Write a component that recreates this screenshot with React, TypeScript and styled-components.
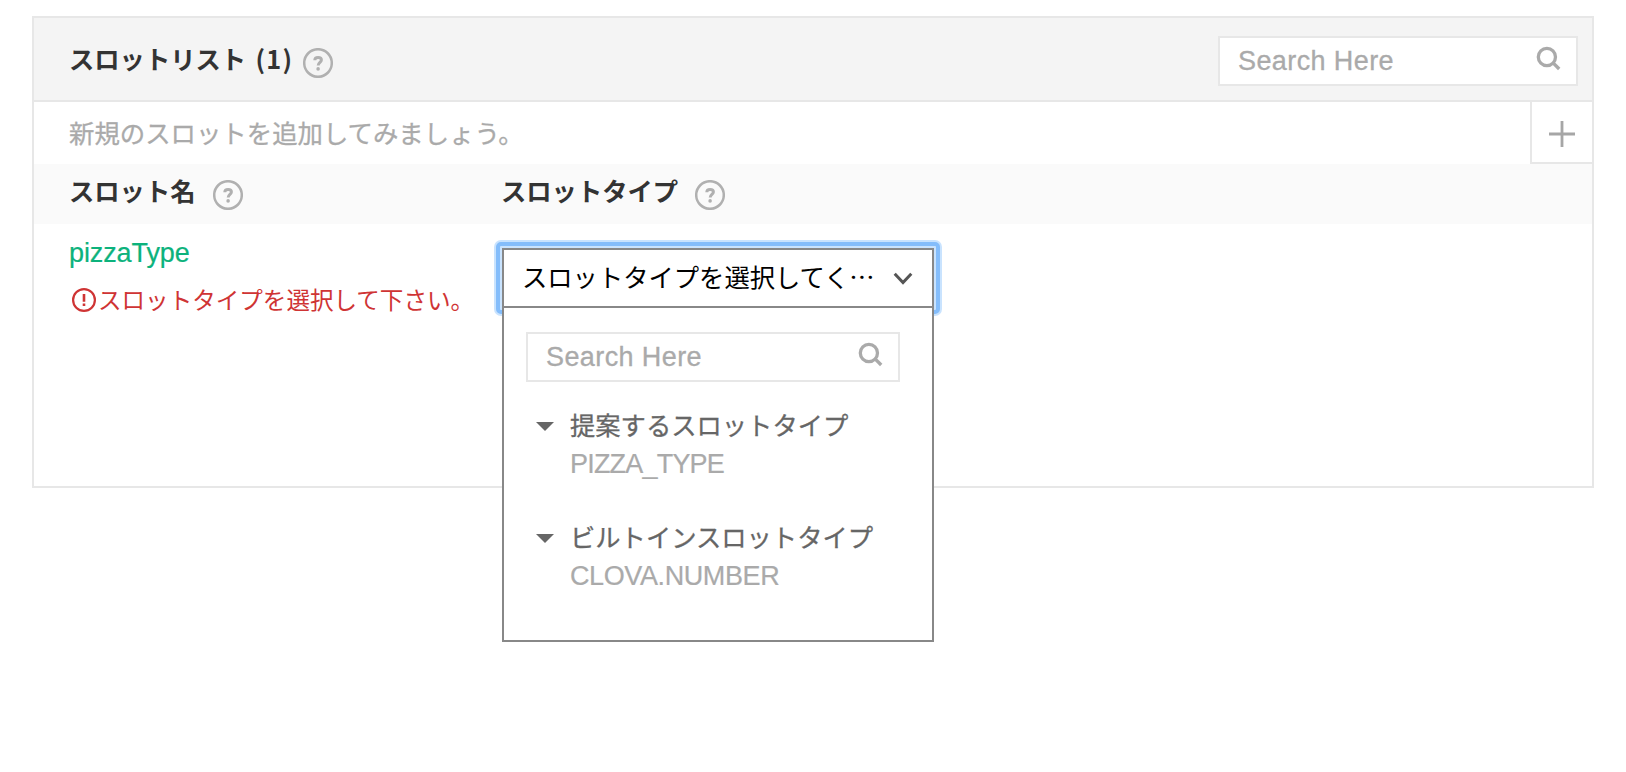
import React from "react";
import styled, { createGlobalStyle } from "styled-components";

const jp = `"Noto Sans CJK JP", sans-serif`;
const latin = `"Liberation Sans", "Noto Sans CJK JP", sans-serif`;

const GlobalStyle = createGlobalStyle`
  * { box-sizing: border-box; }
  body { margin: 0; background: #fff; font-family: ${jp}; }
  svg { display: block; flex: none; }
`;

const Page = styled.main`
  width: 1626px;
  height: 772px;
  padding: 16px 32px;
`;

const Panel = styled.section`
  height: 472px;
  border: 2px solid #e7e7e7;
  display: flex;
  flex-direction: column;
`;

const PanelHeader = styled.header`
  height: 84px;
  padding: 18px 14px 0 35px;
  display: flex;
  justify-content: space-between;
  align-items: flex-start;
  background: #f4f4f4;
  border-bottom: 2px solid #e7e7e7;
`;

const TitleGroup = styled.div`
  display: flex;
  align-items: flex-start;
`;

const Heading = styled.h2<{ $width: number }>`
  margin: 0;
  width: ${(p) => p.$width}px;
  font-size: 25.3px;
  line-height: 44px;
  font-weight: 700;
  color: #333;
  white-space: nowrap;
`;

const Count = styled.span`
  margin-left: 2.5px;
  letter-spacing: 1.2px;
`;

const HelpButton = styled.span`
  margin-top: 12px;
`;

const SearchBox = styled.label<{ $width: number }>`
  width: ${(p) => p.$width}px;
  height: 50px;
  padding: 0 14px 0 18px;
  display: flex;
  align-items: flex-start;
  justify-content: space-between;
  background: #fff;
  border: 2px solid #e7e7e7;
`;

const SearchText = styled.span`
  font-family: ${latin};
  font-size: 27px;
  line-height: 46px;
  letter-spacing: 0.4px;
  color: #aaa;
  -webkit-text-stroke: 0.3px #aaa;
`;

const SearchIconSlot = styled.span`
  margin-top: 7px;
`;

const AddRow = styled.div`
  height: 62px;
  display: flex;
  justify-content: space-between;
`;

const AddHint = styled.p`
  margin: 0;
  padding-left: 35px;
  font-size: 25.4px;
  line-height: 60px;
  color: #aaa;
  -webkit-text-stroke: 0.3px #aaa;
`;

const AddButton = styled.button`
  width: 62px;
  height: 62px;
  margin: 0;
  padding: 3px 0 0;
  display: flex;
  align-items: center;
  justify-content: center;
  background: #fff;
  border: 0 solid #e7e7e7;
  border-width: 0 0 2px 2px;
`;

const ColumnHeader = styled.div`
  height: 60px;
  padding: 4px 0 0 35px;
  display: grid;
  grid-template-columns: 432px 1fr;
  background: #fafafa;
`;

const SlotRow = styled.div`
  flex: 1;
  padding-left: 36px;
  display: grid;
  grid-template-columns: 432px 432px;
`;

const NameCell = styled.div`
  padding-top: 9px;
`;

const SlotName = styled.div`
  margin-left: -1px;
  font-family: ${latin};
  font-size: 27px;
  line-height: 41px;
  letter-spacing: -0.1px;
  color: #0cb27c;
  -webkit-text-stroke: 0.2px #0cb27c;
`;

const ErrorMessage = styled.div`
  margin-top: 5px;
  padding-left: 2px;
  display: flex;
  align-items: flex-start;
  gap: 2px;
  font-size: 23.55px;
  line-height: 40px;
  color: #cf3434;
  white-space: nowrap;

  svg { margin-top: 9px; }
`;

const SelectCell = styled.div`
  padding-top: 24px;
`;

const Select = styled.div`
  position: relative;
  width: 432px;
  height: 60px;

  &::before {
    content: "";
    position: absolute;
    inset: -6px;
    border-radius: 5px;
    background: #c9e3fe;
    border: 4px solid #84bdfb;
    box-shadow: 0 0 0 2px #c9e3fe;
  }
`;

const SelectValue = styled.div`
  position: relative;
  height: 60px;
  padding: 0 19px 0 18px;
  display: flex;
  align-items: flex-start;
  justify-content: space-between;
  background: #fff;
  border: 2px solid #888;

  svg { margin-top: 22px; }
`;

const SelectText = styled.span`
  font-size: 25.3px;
  line-height: 53px;
  color: #000;
  white-space: nowrap;
`;

const Menu = styled.div`
  position: absolute;
  top: 58px;
  left: 0;
  width: 432px;
  height: 336px;
  padding: 24px 22px 0;
  background: #fff;
  border: 2px solid #888;
`;

const OptionGroup = styled.div<{ $top: number }>`
  margin-top: ${(p) => p.$top}px;
  padding-left: 10px;
  display: flex;
  gap: 16px;
`;

const Caret = styled.span`
  width: 18px;
  height: 9px;
  margin-top: 16px;
  background: #666;
  clip-path: polygon(0 0, 100% 0, 50% 100%);
`;

const GroupTitle = styled.div`
  font-size: 25.3px;
  line-height: 36px;
  height: 39px;
  color: #666;
  white-space: nowrap;
  -webkit-text-stroke: 0.3px #666;
`;

const Option = styled.div<{ $spacing: number }>`
  font-family: ${latin};
  font-size: 27px;
  line-height: 38px;
  height: 38px;
  letter-spacing: ${(p) => p.$spacing}px;
  color: #aaa;
  -webkit-text-stroke: 0.2px #aaa;
`;

const HelpIcon = () => (
  <svg width="30" height="30" viewBox="0 0 30 30" fill="none">
    <circle cx="15" cy="15" r="13.8" stroke="#b0b0b0" strokeWidth="2.5" />
    <path d="M11.8 12.2C11.8 10.2 13.1 9.4 15.1 9.4S18.4 10.4 18.4 12C18.4 14.4 15.2 14.6 15.2 17.6" stroke="#b0b0b0" strokeWidth="3" />
    <circle cx="15.1" cy="20.9" r="1.8" fill="#b0b0b0" />
  </svg>
);

const SearchIcon = () => (
  <svg width="26" height="26" viewBox="0 0 26 26" fill="none" stroke="#aaa" strokeWidth="3.3">
    <circle cx="10.9" cy="12" r="8.6" />
    <path d="M16.6 17.4L23.2 24" strokeWidth="3.4" />
  </svg>
);

const PlusIcon = () => (
  <svg width="28" height="28" viewBox="0 0 28 28" stroke="#a6a6a6" strokeWidth="2.8">
    <path d="M1 14H27M14 1V27" />
  </svg>
);

const ErrorIcon = () => (
  <svg width="24" height="24" viewBox="0 0 24 24" fill="none">
    <circle cx="12" cy="12" r="10.9" stroke="#cf3434" strokeWidth="2.2" />
    <path d="M12 6V13.8M12 15.6V18" stroke="#cf3434" strokeWidth="2.6" />
  </svg>
);

const ChevronIcon = () => (
  <svg width="20" height="14" viewBox="0 0 20 14" fill="none">
    <path d="M1.7 1.8L10 10.6L18.3 1.8" stroke="#555" strokeWidth="3" />
  </svg>
);

const SearchField = ({ width }: { width: number }) => (
  <SearchBox $width={width}>
    <SearchText>Search Here</SearchText>
    <SearchIconSlot><SearchIcon /></SearchIconSlot>
  </SearchBox>
);

const groups = [
  { title: "提案するスロットタイプ", option: "PIZZA_TYPE", top: 24, spacing: -0.8 },
  { title: "ビルトインスロットタイプ", option: "CLOVA.NUMBER", top: 35, spacing: -0.4 },
];

export default function App() {
  return (
    <Page>
      <GlobalStyle />
      <Panel>
        <PanelHeader>
          <TitleGroup>
            <Heading $width={234}>スロットリスト<Count> (1)</Count></Heading>
            <HelpButton><HelpIcon /></HelpButton>
          </TitleGroup>
          <SearchField width={360} />
        </PanelHeader>
        <AddRow>
          <AddHint>新規のスロットを追加してみましょう。</AddHint>
          <AddButton aria-label="追加"><PlusIcon /></AddButton>
        </AddRow>
        <ColumnHeader>
          <TitleGroup>
            <Heading $width={144}>スロット名</Heading>
            <HelpButton><HelpIcon /></HelpButton>
          </TitleGroup>
          <TitleGroup>
            <Heading $width={194}>スロットタイプ</Heading>
            <HelpButton><HelpIcon /></HelpButton>
          </TitleGroup>
        </ColumnHeader>
        <SlotRow>
          <NameCell>
            <SlotName>pizzaType</SlotName>
            <ErrorMessage><ErrorIcon />スロットタイプを選択して下さい。</ErrorMessage>
          </NameCell>
          <SelectCell>
            <Select>
              <SelectValue>
                <SelectText>スロットタイプを選択してく…</SelectText>
                <ChevronIcon />
              </SelectValue>
              <Menu>
                <SearchField width={374} />
                {groups.map((g) => (
                  <OptionGroup key={g.title} $top={g.top}>
                    <Caret />
                    <div>
                      <GroupTitle>{g.title}</GroupTitle>
                      <Option $spacing={g.spacing}>{g.option}</Option>
                    </div>
                  </OptionGroup>
                ))}
              </Menu>
            </Select>
          </SelectCell>
        </SlotRow>
      </Panel>
    </Page>
  );
}
